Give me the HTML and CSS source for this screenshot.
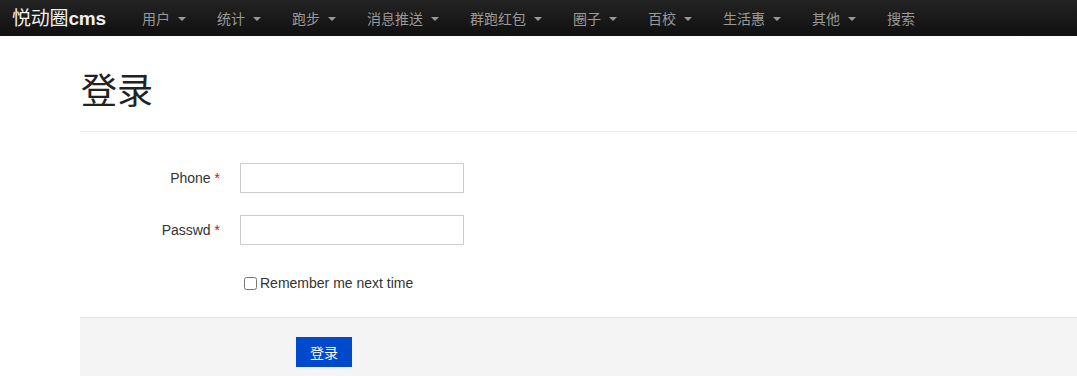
FILE: index.html
```html
<!DOCTYPE html>
<html>
<head>
    <title>悦动圈cms - 登录</title>
    <link rel="stylesheet" href="styles.css">
</head>
<body>
    <!-- Top navigation -->
    <div class="navbar">
        <a class="brand" href="#"><span class="brand-cn">悦动圈</span>cms</a>
        <ul class="nav">
            <li><a href="#">用户<b class="caret"></b></a></li>
            <li><a href="#">统计<b class="caret"></b></a></li>
            <li><a href="#">跑步<b class="caret"></b></a></li>
            <li><a href="#">消息推送<b class="caret"></b></a></li>
            <li><a href="#">群跑红包<b class="caret"></b></a></li>
            <li><a href="#">圈子<b class="caret"></b></a></li>
            <li><a href="#">百校<b class="caret"></b></a></li>
            <li><a href="#">生活惠<b class="caret"></b></a></li>
            <li><a href="#">其他<b class="caret"></b></a></li>
            <li><a href="#">搜索</a></li>
        </ul>
    </div>

    <div class="main">
        <div class="page-header">
            <h1>登录</h1>
        </div>

        <form class="form-horizontal">
            <div class="control-group">
                <label class="control-label" for="phone">Phone <span class="required">*</span></label>
                <div class="controls">
                    <input type="text" id="phone">
                </div>
            </div>
            <div class="control-group">
                <label class="control-label" for="passwd">Passwd <span class="required">*</span></label>
                <div class="controls">
                    <input type="password" id="passwd">
                </div>
            </div>
            <div class="control-group remember">
                <label class="checkbox"><input type="checkbox" id="remember">Remember me next time</label>
            </div>
            <div class="form-actions">
                <button type="submit" class="btn-primary">登录</button>
            </div>
        </form>
    </div>
</body>
</html>
```

FILE: styles.css
```css
body {
    margin: 0;
    font-family: "Liberation Sans", Arial, "Noto Sans CJK SC", sans-serif;
    font-size: 14px;
    color: #333;
    background: #fff;
}
a {
    text-decoration: none;
}

/* navbar */
.navbar {
    display: flex;
    align-items: center;
    height: 36px;
    background: linear-gradient(to bottom, #232323, #101010);
    overflow: hidden;
    white-space: nowrap;
}
.brand {
    width: 95px;
    margin: 0 20px 0 12px;
    color: #eee;
    font-size: 19px;
    font-weight: bold;
    line-height: 34px;
    letter-spacing: -0.2px;
}
.brand-cn {
    font-family: "Noto Sans CJK SC", sans-serif;
    font-weight: normal;
}
.nav {
    display: flex;
    list-style: none;
    margin: 0;
    padding: 0;
}
.nav a {
    display: flex;
    align-items: center;
    padding: 0 15px;
    line-height: 34px;
    color: #999;
    font-family: "Noto Sans CJK SC", sans-serif;
    font-size: 14px;
}
.caret {
    width: 0;
    height: 0;
    margin: 2px 1px 0 8px;
    border-top: 4px solid #999;
    border-left: 4px solid transparent;
    border-right: 4px solid transparent;
}

/* content */
.main {
    padding-left: 80px;
}
.page-header {
    padding: 30px 0 20px 1px;
    border-bottom: 1px solid #eee;
    margin-bottom: 31px;
}
.page-header h1 {
    margin: 0;
    font-family: "Noto Sans CJK SC", serif;
    font-weight: normal;
    font-size: 36px;
    line-height: 45px;
    color: #222;
}
.control-group {
    display: flex;
    align-items: center;
    margin-bottom: 22px;
}
.control-label {
    width: 140px;
    text-align: right;
}
.required {
    color: #e00;
}
.controls {
    margin-left: 20px;
}
.controls input {
    box-sizing: border-box;
    width: 224px;
    height: 30px;
    border: 1px solid #ccc;
    margin: 0;
    padding: 4px 6px;
}
.remember {
    margin: 30px 0 26px 164px;
}
.checkbox {
    display: flex;
    align-items: center;
    color: #333;
}
.checkbox input {
    width: 13px;
    height: 13px;
    margin: 0 3px 0 0;
}
.form-actions {
    background: #f4f4f4;
    border-top: 1px solid #e2e2e2;
    padding: 19px 0 19px 216px;
}
.btn-primary {
    width: 56px;
    height: 30px;
    border: none;
    background: #0049cc;
    color: #fff;
    font-family: "Noto Sans CJK SC", sans-serif;
    font-size: 14px;
    cursor: pointer;
}
```
